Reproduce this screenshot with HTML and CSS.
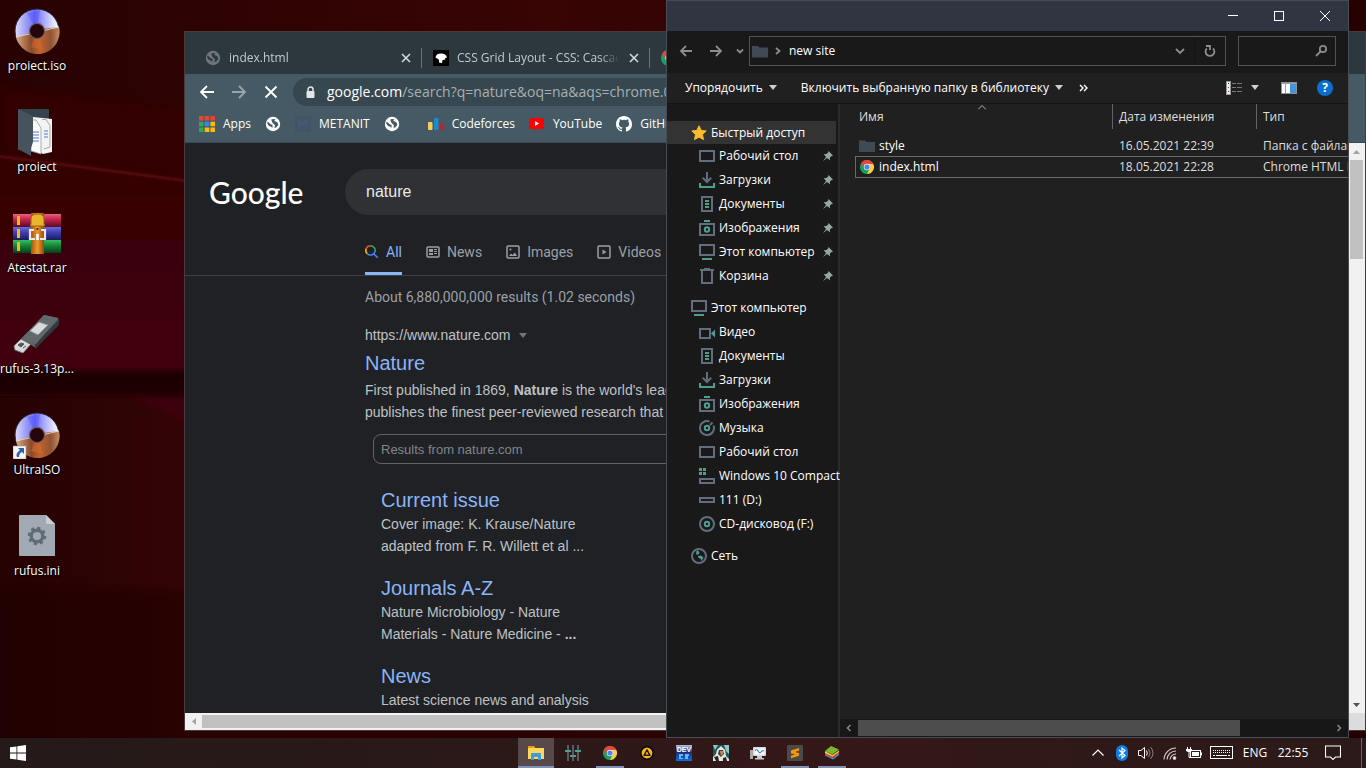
FILE: index.html
```html
<!DOCTYPE html>
<html lang="ru">
<head>
<meta charset="utf-8">
<title>Desktop</title>
<link rel="stylesheet" href="styles.css">
</head>
<body>
<svg class="defs" aria-hidden="true">
  <defs>
    <linearGradient id="gDiscA" x1="0" y1="0" x2="1" y2="0"><stop offset="0" stop-color="#dcdcff"/><stop offset=".25" stop-color="#9c9cf4"/><stop offset=".45" stop-color="#6a6aff"/><stop offset=".7" stop-color="#b4b4fa"/><stop offset="1" stop-color="#fff"/></linearGradient>
    <linearGradient id="gDiscB" x1="0" y1="0" x2="1" y2="0"><stop offset="0" stop-color="#d9a883"/><stop offset=".35" stop-color="#8a4a2a"/><stop offset=".55" stop-color="#c2622c"/><stop offset=".8" stop-color="#8d5335"/><stop offset="1" stop-color="#c88d63"/></linearGradient>
    <linearGradient id="gR" x1="0" y1="0" x2="0" y2="1"><stop offset="0" stop-color="#e8607f"/><stop offset=".4" stop-color="#c72550"/><stop offset="1" stop-color="#5a0a20"/></linearGradient>
    <linearGradient id="gB" x1="0" y1="0" x2="0" y2="1"><stop offset="0" stop-color="#6a6ae0"/><stop offset=".4" stop-color="#4040b4"/><stop offset="1" stop-color="#1b1b5c"/></linearGradient>
    <linearGradient id="gG" x1="0" y1="0" x2="0" y2="1"><stop offset="0" stop-color="#35c060"/><stop offset=".4" stop-color="#168a3c"/><stop offset="1" stop-color="#06401a"/></linearGradient>
    <linearGradient id="gBelt" x1="0" y1="0" x2="1" y2="0"><stop offset="0" stop-color="#a8560c"/><stop offset=".5" stop-color="#eb9a2c"/><stop offset="1" stop-color="#95480a"/></linearGradient>
    <linearGradient id="gDev" x1="0" y1="0" x2="0" y2="1"><stop offset="0" stop-color="#b8bfe0"/><stop offset=".45" stop-color="#1b2f78"/><stop offset="1" stop-color="#0a70e0"/></linearGradient>
  </defs>
  <symbol id="disc" viewBox="0 0 48 48">
    <circle cx="24" cy="24" r="22" fill="url(#gDiscA)" stroke="#2c2430" stroke-width="1"/>
    <path d="M3 30A22 22 0 0 0 46 20L30 22Z" fill="url(#gDiscB)"/>
    <path d="M3 30 46 20" stroke="#eee2d8" stroke-width="1.2" opacity=".8"/>
    <path d="M18 40 24 24 30 43" fill="#db6a2e" opacity=".5"/>
    <path d="M14 6 24 24 27 3" fill="#4040ff" opacity=".3"/>
    <circle cx="24" cy="24" r="7.6" fill="#250507" stroke="#6e5a60" stroke-width="1.2"/>
  </symbol>
  <symbol id="chrome" viewBox="0 0 48 48">
    <path d="M24 24 3.200 12A24 24 0 0 1 44.800 12Z" fill="#e0483c"/>
    <path d="M24 24 44.800 12A24 24 0 0 1 24 48Z" fill="#ffcd42"/>
    <path d="M24 24V48A24 24 0 0 1 3.200 12Z" fill="#16a15f"/>
    <path d="M24 13H44.800L33 30Z" fill="#ffcd42"/>
    <path d="M15 30 3.200 12 24 24 33 30 24 48Z" fill="#16a15f"/>
    <path d="M3.200 12A24 24 0 0 1 44.800 12L43.500 13H24L14 29Z" fill="#e0483c"/>
    <circle cx="24" cy="24" r="11" fill="#f1f1f1"/><circle cx="24" cy="24" r="8.800" fill="#4a86f0"/>
  </symbol>
  <symbol id="globe" viewBox="0 0 16 16">
    <circle cx="8" cy="8" r="7.200" fill="currentColor"/>
    <path d="M2.600 5.400 6 8.400 7.600 8.800 7.400 12 5.800 10.400 4 10 2.200 7.600ZM6.600 3.200 10 3 9.400 5 12.400 6.200 13.400 9 11 11.800 9.400 11.400 10 9.200 7.600 7 6.600 5Z" fill="var(--hole)"/>
  </symbol>
  <symbol id="folder" viewBox="0 0 16 13"><path d="M0 1h6l1.500 1.500H16V12.500H0Z" fill="#3f4a55"/></symbol>
  <symbol id="s-star" viewBox="0 0 16 16"><path d="M8 .8 10.200 5.400 15.200 6 11.500 9.500 12.500 14.600 8 12.100 3.500 14.600 4.500 9.500.8 6 5.800 5.400Z" fill="#fbbb2c" stroke="#fbbb2c" stroke-linejoin="round"/></symbol>
  <symbol id="s-desk" viewBox="0 0 16 16"><rect x="1" y="3" width="14" height="10" fill="none" stroke="#626d7d" stroke-width="2"/></symbol>
  <symbol id="s-down" viewBox="0 0 16 16"><path d="M8 0V9M3.800 5.800 8 10 12.200 5.800" fill="none" stroke="#626d7d" stroke-width="2"/><path d="M1 11v4h14v-4" fill="none" stroke="#4f9f8f" stroke-width="2"/></symbol>
  <symbol id="s-doc" viewBox="0 0 16 16"><rect x="3" y="1" width="10" height="14" fill="none" stroke="#626d7d" stroke-width="2"/><path d="M6 5h4M6 8h4M6 11h4" stroke="#4f9f8f" stroke-width="2"/></symbol>
  <symbol id="s-img" viewBox="0 0 16 16"><rect x="1" y="4" width="14" height="11" fill="none" stroke="#626d7d" stroke-width="2"/><path d="M5 1h6" stroke="#4f9f8f" stroke-width="2"/><circle cx="8" cy="9.500" r="2.200" fill="none" stroke="#4f9f8f" stroke-width="2"/></symbol>
  <symbol id="s-pc" viewBox="0 0 16 16"><rect x="1" y="1" width="14" height="10" fill="none" stroke="#626d7d" stroke-width="2"/><path d="M3 15h10" stroke="#4f9f8f" stroke-width="2"/></symbol>
  <symbol id="s-bin" viewBox="0 0 16 16"><path d="M1 2H15M5 1h6M3 2V15H13V2" fill="none" stroke="#626d7d" stroke-width="2"/></symbol>
  <symbol id="s-video" viewBox="0 0 16 16"><rect x="1" y="5" width="10" height="9" fill="none" stroke="#626d7d" stroke-width="2"/><path d="M16 5.500v8L12 9.500Z" fill="#4f9f8f"/></symbol>
  <symbol id="s-music" viewBox="0 0 16 16"><path d="M10.500 1.500A7 7 0 1 0 14.500 5.500M11 5 13.500 2.500" fill="none" stroke="#626d7d" stroke-width="2"/><circle cx="8" cy="8" r="2.200" fill="none" stroke="#4f9f8f" stroke-width="2"/></symbol>
  <symbol id="s-win" viewBox="0 0 16 16"><path d="M0 0h3v3H0ZM4 0h3v3H4ZM0 4h3v3H0ZM4 4h3v3H4Z" fill="#4f9f8f"/><rect x="1" y="11" width="14" height="4" fill="none" stroke="#626d7d" stroke-width="2"/></symbol>
  <symbol id="s-drive" viewBox="0 0 16 16"><rect x="1" y="6" width="14" height="4" fill="none" stroke="#626d7d" stroke-width="2"/></symbol>
  <symbol id="s-cd" viewBox="0 0 16 16"><circle cx="8" cy="8" r="7" fill="none" stroke="#626d7d" stroke-width="2"/><circle cx="8" cy="8" r="2.200" fill="none" stroke="#4f9f8f" stroke-width="2"/></symbol>
  <symbol id="s-net" viewBox="0 0 16 16"><circle cx="8" cy="8" r="7" fill="none" stroke="#626d7d" stroke-width="2"/><path d="M5.500 3 7 2.500 8.500 4.500 7.500 6.500 5 6.500ZM7 8 10 7.500 12.500 9.500 10.500 13 9.500 10.500 7.500 10Z" fill="#4f9f8f"/></symbol>
  <symbol id="pin" viewBox="0 0 12 12"><path d="M6.500 1 11 5.500 9.600 6 8 7.600 7.800 10.200 5 7.900 1 11.300 4 7 1.700 4.300 4.400 4 6.100 2.400Z" fill="#98a3a8"/></symbol>
</svg>

<main class="desktop">
  <svg class="wallpaper" viewBox="0 0 1366 738" preserveAspectRatio="none" aria-hidden="true">
    <defs>
      <linearGradient id="wTop" x1="0" y1="0" x2="1" y2="0"><stop offset="0" stop-color="#280203"/><stop offset=".4" stop-color="#380404"/><stop offset="1" stop-color="#260102"/></linearGradient>
      <linearGradient id="wMid" x1="0" y1="0" x2="0" y2="1"><stop offset="0" stop-color="#340406"/><stop offset="1" stop-color="#440608"/></linearGradient>
      <linearGradient id="wLow" x1="0" y1="0" x2="1" y2="0"><stop offset="0" stop-color="#260203"/><stop offset=".13" stop-color="#320405"/><stop offset=".5" stop-color="#380404"/><stop offset="1" stop-color="#2a0203"/></linearGradient>
      <filter id="soft"><feGaussianBlur stdDeviation="3"/></filter>
      <filter id="fine" x="-5%" y="-50%" width="110%" height="200%"><feGaussianBlur stdDeviation="1.500"/></filter>
    </defs>
    <rect width="1366" height="738" fill="url(#wTop)"/>
    <path d="M0 86 1366 240V400H0Z" fill="#300405" filter="url(#soft)"/>
    <path d="M-20 154 1386 334V400H-20Z" fill="url(#wMid)" filter="url(#soft)"/>
    <path d="M-10 155 196 182" stroke="#560a0e" stroke-width="3" filter="url(#fine)"/>
    <rect y="396" width="1366" height="342" fill="url(#wLow)"/>
    <path d="M130 396H200V430Z" fill="#3e0507" filter="url(#soft)"/>
    <rect x="-20" y="370" width="1406" height="26" fill="#1f0203" filter="url(#soft)"/>
    <rect x="-20" y="590" width="1406" height="170" fill="#1c0102" opacity=".4" filter="url(#soft)"/>
  </svg>

  <nav class="shortcuts" aria-label="Desktop icons">
    <a class="shortcut" href="#"><svg class="shortcut-icon"><use href="#disc"/></svg><span>proiect.iso</span></a>
    <a class="shortcut" href="#"><svg class="shortcut-icon" viewBox="0 0 48 48">
      <path d="M5 1H36V42H5Z" fill="#36424c"/><path d="M20 9 39 11V44L30 46 20 40Z" fill="#f3f3f3"/><path d="M29 11.500h4l4 6V39l-6 2" fill="none" stroke="#aaa"/><path d="M18 12h5l5 8V46L18 43Z" fill="#fafafa" stroke="#999" stroke-width=".8"/><path d="M20 24h6M20 27h6M19 30h7M18 33h8M31 23h4M31 26h4M31 29h4" stroke="#4a80c8" stroke-width="1.200"/><path d="M5 1 20 8V34L18 40V48L5 41Z" fill="#46525c"/></svg><span>proiect</span></a>
    <a class="shortcut" href="#"><svg class="shortcut-icon" viewBox="0 0 48 48">
      <rect y="5" width="48" height="13" fill="url(#gR)"/><rect y="18" width="48" height="13" fill="url(#gB)"/><rect y="31" width="48" height="13" fill="url(#gG)"/><path d="M4 7h3v9H4ZM4 20h3v9H4ZM4 33h3v9H4Z" fill="#f5b914"/>
      <rect x="18" y="4" width="13" height="41" fill="url(#gBelt)"/><path d="M18 15V10q0-5 6.500-5T31 10v5l1 2H17Z" fill="#e8b62c" stroke="#9c6410"/><path d="M21 21h-4v9h5M27 30h5V21h-4" fill="none" stroke="#e8e8ec" stroke-width="2.200"/><path d="M24.500 25v6" stroke="#fff" stroke-width="2.600"/><circle cx="24.500" cy="20" r="1" fill="#402000"/></svg><span>Atestat.rar</span></a>
    <a class="shortcut" href="#"><svg class="shortcut-icon" viewBox="0 0 48 48">
      <path d="M1 36 8 29 18 34 10 43 2 40Z" fill="#d8d9da" stroke="#777"/><path d="M5 35 8 33 11 34 8 37ZM10 38l3-2" fill="#555" stroke="#555"/><path d="M8 29 31 5 45 8 46 13 23 38Z" fill="#5b6367"/><path d="M46 9V15L22 39V34Z" fill="#32393c"/><path d="M8 29 31 5 45 8 23 34Z" fill="#61696d"/><path d="M17 21 26 12 35 15 25 25Z" fill="#d6d8d9" stroke="#8b8f91"/></svg><span>rufus-3.13p...</span></a>
    <a class="shortcut" href="#"><svg class="shortcut-icon" viewBox="0 0 48 48"><use href="#disc"/><rect y="35" width="13" height="13" fill="#f4f4f4" stroke="#999" stroke-width=".6"/><path d="M5 37h6v6L9 41q-3 1-3 5H4Q2 43 7 39Z" fill="#2b62a8"/></svg><span>UltraISO</span></a>
    <a class="shortcut" href="#"><svg class="shortcut-icon" viewBox="0 0 48 48"><path d="M7 3H33L42 12V44H7Q6 44 6 43V4Q6 3 7 3Z" fill="#a1a9b3"/><path d="M33 3v7.500q0 1.500 1.500 1.500H42Z" fill="#c8cdd3"/><circle cx="24" cy="24" r="5.800" fill="none" stroke="#606b77" stroke-width="3.400"/><circle cx="24" cy="24" r="8" fill="none" stroke="#606b77" stroke-width="2.600" stroke-dasharray="3.140 3.140"/></svg><span>rufus.ini</span></a>
  </nav>

  <section class="browser" aria-label="Chrome">
    <div class="tabstrip">
      <div class="tab tab-first"><svg class="fav fav-dim"><use href="#globe"/></svg><span class="tab-title">index.html</span><button class="tab-close" aria-label="Close"><svg viewBox="0 0 10 10"><path d="M1 1 9 9M9 1 1 9"/></svg></button></div>
      <div class="tab tab-mdn"><svg class="fav" viewBox="0 0 16 16"><rect width="16" height="16" fill="#000"/><path d="M2.500 7.500Q3 3.500 8 3.500t6 4L12 8l.5 1.500-3 .5-.5 3-3-.5V10L5 9Z" fill="#fff"/></svg><span class="tab-title">CSS Grid Layout - CSS: Cascading</span><button class="tab-close" aria-label="Close"><svg viewBox="0 0 10 10"><path d="M1 1 9 9M9 1 1 9"/></svg></button></div>
      <div class="tab"><svg class="fav"><use href="#chrome"/></svg></div>
    </div>
    <div class="toolbar">
      <button aria-label="Back"><svg viewBox="0 0 16 16"><path d="M15 8H2M8 2 2 8l6 6"/></svg></button>
      <button class="dim" aria-label="Forward"><svg viewBox="0 0 16 16"><path d="M1 8H14M8 2l6 6-6 6"/></svg></button>
      <button aria-label="Stop"><svg viewBox="0 0 16 16"><path d="M2.500 2.500 13.500 13.500M13.500 2.500 2.500 13.500"/></svg></button>
      <div class="omnibox"><svg viewBox="0 0 10 13"><path d="M2.500 6V3.500a2.500 2.500 0 0 1 5 0V6" fill="none" stroke="#e3e6e8" stroke-width="1.500"/><rect x="1" y="5" width="8" height="7" rx="1" fill="#e3e6e8"/></svg>
        <div class="url" role="textbox" aria-label="Address" contenteditable="true"><b>google.com</b>/search?q=nature&amp;oq=na&amp;aqs=chrome.0.0</div></div>
    </div>
    <nav class="bookmarks" aria-label="Bookmarks">
      <a class="bm" href="#"><svg viewBox="0 0 14 14"><path d="M0 0h4v4H0ZM5 0h4v4H5ZM10 0h4v4h-4Z" fill="#ea4335"/><path d="M0 5h4v4H0ZM0 10h4v4H0Z" fill="#34a853"/><path d="M5 5h4v4H5Z" fill="#2f8af5"/><path d="M10 5h4v4h-4ZM5 10h4v4H5ZM10 10h4v4h-4Z" fill="#fbbc05"/></svg>Apps</a>
      <a class="bm" href="#" aria-label="Site"><svg><use href="#globe"/></svg></a>
      <a class="bm" href="#"><svg viewBox="0 0 14 14"><rect x=".5" y=".5" width="13" height="13" fill="#42556a" stroke="#3f5568"/><path d="M4 10V4l3 3 3-3v6" fill="none" stroke="#4a5d70"/></svg>METANIT</a>
      <a class="bm bm-wide" href="#" aria-label="Site"><svg><use href="#globe"/></svg></a>
      <a class="bm" href="#"><svg viewBox="0 0 16 14"><rect y="5" width="4.500" height="8" rx="1" fill="#f7cc57"/><rect x="6" y="1" width="4.500" height="12" rx="1" fill="#1e88d0"/><rect x="12" y="6" width="4" height="7" rx="1" fill="#b3272e"/></svg>Codeforces</a>
      <a class="bm" href="#"><svg viewBox="0 0 16 14"><rect y="1" width="15" height="11" rx="2.500" fill="#f00"/><path d="M6 4v5l4-2.500Z" fill="#fff"/></svg>YouTube</a>
      <a class="bm" href="#"><svg viewBox="0 0 16 16"><path fill="#fff" d="M8 0C3.580 0 0 3.580 0 8c0 3.540 2.290 6.530 5.470 7.590.4.070.55-.17.55-.38 0-.19-.01-.82-.01-1.490-2.010.37-2.530-.49-2.690-.94-.09-.23-.48-.94-.82-1.130-.28-.15-.68-.52-.01-.53.63-.01 1.080.58 1.230.82.72 1.210 1.870.87 2.330.66.070-.52.28-.87.51-1.070-1.780-.2-3.640-.89-3.640-3.950 0-.87.31-1.590.82-2.150-.08-.2-.36-1.020.08-2.120 0 0 .67-.21 2.200.82a7.600 7.600 0 0 1 4 0c1.530-1.040 2.200-.82 2.200-.82.44 1.100.16 1.920.08 2.120.51.56.82 1.270.82 2.150 0 3.070-1.870 3.750-3.650 3.950.29.25.54.73.54 1.480 0 1.070-.01 1.930-.01 2.200 0 .21.15.46.55.38A8 8 0 0 0 16 8c0-4.420-3.580-8-8-8"/></svg>GitHub</a>
    </nav>
    <div class="viewport">
      <div class="page">
        <header class="page-head"><a class="logo" href="#">Google</a><input class="query" type="text" value="nature" aria-label="Search"></header>
        <nav class="page-tabs">
          <a class="ptab ptab-on" href="#"><svg viewBox="0 0 16 16" fill="none" stroke-width="1.800"><path d="M6 1A5 5 0 0 0 1.500 4" stroke="#ea4335"/><path d="M1.500 4A5.300 5.300 0 0 0 2.600 10" stroke="#fbbc05"/><path d="M6 1A5.300 5.300 0 0 1 11.500 7.500" stroke="#34a853"/><path d="M2.600 10A5.300 5.300 0 0 0 11.500 7M9.800 10 14.500 14.500" stroke="#4285f4"/></svg>All</a>
          <a class="ptab" href="#"><svg viewBox="0 0 14 14"><rect x="1" y="2" width="12" height="10" rx="1" fill="none" stroke="#9aa0a6" stroke-width="1.500"/><path d="M3 4h4v3H3ZM8 4h3v1H8ZM8 6h3v1H8ZM3 8h4v2H3ZM8 8h3v1H8Z" fill="#9aa0a6"/></svg>News</a>
          <a class="ptab" href="#"><svg viewBox="0 0 14 14"><rect x="1" y="1" width="12" height="12" rx="1" fill="none" stroke="#9aa0a6" stroke-width="1.500"/><path d="M3 11 5 8.500 6.500 10 9 7.500 11 11Z" fill="#9aa0a6"/><circle cx="4.500" cy="4.500" r="1" fill="#9aa0a6"/></svg>Images</a>
          <a class="ptab" href="#"><svg viewBox="0 0 14 14"><rect x="1" y="1" width="12" height="12" rx="1" fill="none" stroke="#9aa0a6" stroke-width="1.500"/><path d="M5.500 4.500v5L9.500 7Z" fill="#9aa0a6"/></svg>Videos</a>
        </nav>
        <div class="results">
          <p class="stats">About 6,880,000,000 results (1.02 seconds)</p>
          <p class="cite">https://www.nature.com <svg viewBox="0 0 8 5"><path d="M0 0h8L4 5Z" fill="#70757a"/></svg></p>
          <h2><a href="#">Nature</a></h2>
          <p class="snippet">First published in 1869, <b>Nature</b> is the world's leading<br>publishes the finest peer-reviewed research that</p>
          <input class="sitesearch" type="text" placeholder="Results from nature.com" aria-label="Results from nature.com">
          <div class="sitelinks">
            <div><h3><a href="#">Current issue</a></h3><p>Cover image: K. Krause/Nature<br>adapted from F. R. Willett et al ...</p></div>
            <div><h3><a href="#">Journals A-Z</a></h3><p>Nature Microbiology - Nature<br>Materials - Nature Medicine - <b>...</b></p></div>
            <div><h3><a href="#">News</a></h3><p>Latest science news and analysis</p></div>
          </div>
        </div>
      </div>
      <div class="vbar"><button aria-label="Up"><svg viewBox="0 0 7 4"><path d="M0 4h7L3.500 0Z" fill="#a3a3a3"/></svg></button><div class="vthumb"></div><button class="vdown" aria-label="Down"><svg viewBox="0 0 7 4"><path d="M0 0h7L3.500 4Z" fill="#505050"/></svg></button></div>
      <div class="hbar"><button aria-label="Left"><svg viewBox="0 0 4 7"><path d="M4 0v7L0 3.500Z" fill="#a3a3a3"/></svg></button><div class="hthumb"></div></div>
      <div class="corner"></div>
    </div>
  </section>

  <section class="explorer" aria-label="new site">
    <div class="titlebar">
      <button aria-label="Minimize"><svg viewBox="0 0 12 12"><path d="M1 5.500h10"/></svg></button>
      <button aria-label="Maximize"><svg viewBox="0 0 12 12"><rect x="1.500" y="1.500" width="9" height="9"/></svg></button>
      <button aria-label="Close"><svg viewBox="0 0 12 12"><path d="M1 1 11 11M11 1 1 11"/></svg></button>
    </div>
    <div class="navbar">
      <button aria-label="Назад"><svg viewBox="0 0 14 14"><path d="M13 7H2M7 2 2 7l5 5"/></svg></button>
      <button aria-label="Вперёд"><svg viewBox="0 0 14 14"><path d="M1 7H12M7 2l5 5-5 5"/></svg></button>
      <button class="nav-small" aria-label="Журнал"><svg viewBox="0 0 14 14"><path d="M4 5.500 7 8.500l3-3"/></svg></button>
      <div class="address"><svg class="address-folder"><use href="#folder"/></svg><svg class="crumb" viewBox="0 0 6 8"><path d="M1 1 4.500 4 1 7"/></svg><a href="#">new site</a>
        <button class="addr-drop" aria-label="Развернуть"><svg viewBox="0 0 14 14"><path d="M3 5 7 9l4-4"/></svg></button><button class="addr-refresh" aria-label="Обновить"><svg viewBox="0 0 14 14"><path d="M3.800 4.500A4.400 4.400 0 1 0 10 4.400M3 2h4v4"/></svg></button></div>
      <div class="find"><input type="search" aria-label="Поиск"><svg viewBox="0 0 14 14"><circle cx="9" cy="5" r="3.200"/><path d="M6.500 7.500 2 12"/></svg></div>
    </div>
    <div class="commands">
      <button class="organize">Упорядочить<svg class="tri" viewBox="0 0 8 5"><path d="M0 0h8L4 5Z"/></svg></button>
      <button class="include">Включить выбранную папку в библиотеку<svg class="tri" viewBox="0 0 8 5"><path d="M0 0h8L4 5Z"/></svg></button>
      <button class="more" aria-label="Ещё"><svg viewBox="0 0 10 8"><path d="M1 1 4 4 1 7M5 1 8 4 5 7" fill="none" stroke="#fff" stroke-width="1.400"/></svg></button>
      <button class="view" aria-label="Вид"><svg viewBox="0 0 16 14"><rect x=".5" y=".5" width="4" height="13" fill="#eee" stroke="#999"/><path d="M2 2.500h1" stroke="#222"/><path d="M2 6.500h1" stroke="#2b6cd0"/><path d="M2 10.500h1" stroke="#d22"/><path d="M6 2.500h4M11 2.500h5M6 6.500h4M11 6.500h5M6 10.500h4M11 10.500h5" stroke="#777"/></svg><svg class="tri" viewBox="0 0 8 5"><path d="M0 0h8L4 5Z"/></svg></button>
      <button class="preview" aria-label="Область просмотра"><svg viewBox="0 0 16 12"><rect x=".5" y=".5" width="15" height="11" fill="#fff" stroke="#8a9299"/><rect x="9" y="2" width="6" height="9" fill="#3f96de"/><path d="M4.500 2v9M1 1.500h14" stroke="#98a0a8"/></svg></button>
      <button class="help" aria-label="Справка">?</button>
    </div>
    <div class="body">
      <nav class="tree" aria-label="Область переходов">
        <div class="group">
          <a class="root root-on" href="#"><svg><use href="#s-star"/></svg>Быстрый доступ</a>
          <a href="#"><svg><use href="#s-desk"/></svg>Рабочий стол<svg class="pin"><use href="#pin"/></svg></a>
          <a href="#"><svg><use href="#s-down"/></svg>Загрузки<svg class="pin"><use href="#pin"/></svg></a>
          <a href="#"><svg><use href="#s-doc"/></svg>Документы<svg class="pin"><use href="#pin"/></svg></a>
          <a href="#"><svg><use href="#s-img"/></svg>Изображения<svg class="pin"><use href="#pin"/></svg></a>
          <a href="#"><svg><use href="#s-pc"/></svg>Этот компьютер<svg class="pin"><use href="#pin"/></svg></a>
          <a href="#"><svg><use href="#s-bin"/></svg>Корзина<svg class="pin"><use href="#pin"/></svg></a>
        </div>
        <div class="group">
          <a class="root" href="#"><svg><use href="#s-pc"/></svg>Этот компьютер</a>
          <a href="#"><svg><use href="#s-video"/></svg>Видео</a>
          <a href="#"><svg><use href="#s-doc"/></svg>Документы</a>
          <a href="#"><svg><use href="#s-down"/></svg>Загрузки</a>
          <a href="#"><svg><use href="#s-img"/></svg>Изображения</a>
          <a href="#"><svg><use href="#s-music"/></svg>Музыка</a>
          <a href="#"><svg><use href="#s-desk"/></svg>Рабочий стол</a>
          <a href="#"><svg><use href="#s-win"/></svg>Windows 10 Compact</a>
          <a href="#"><svg><use href="#s-drive"/></svg>111 (D:)</a>
          <a href="#"><svg><use href="#s-cd"/></svg>CD-дисковод (F:)</a>
        </div>
        <div class="group"><a class="root" href="#"><svg><use href="#s-net"/></svg>Сеть</a></div>
      </nav>
      <div class="files">
        <table>
          <colgroup><col class="c-name"><col class="c-date"><col></colgroup>
          <thead><tr><th><span class="sorted">Имя<svg viewBox="0 0 8 5"><path d="M0 4.500 4 .5 8 4.500"/></svg></span></th><th>Дата изменения</th><th>Тип</th></tr></thead>
          <tbody>
            <tr><td><span class="file"><svg><use href="#folder"/></svg>style</span></td><td>16.05.2021 22:39</td><td>Папка с файлами</td></tr>
            <tr class="focused"><td><span class="file"><svg><use href="#chrome"/></svg>index.html</span></td><td>18.05.2021 22:28</td><td>Chrome HTML Do</td></tr>
          </tbody>
        </table>
        <div class="dark-bar"><button aria-label="Влево"><svg viewBox="0 0 8 8"><path d="M5.500 1 2.500 4l3 3"/></svg></button><div class="dark-track"><div class="dark-thumb"></div></div><button aria-label="Вправо"><svg viewBox="0 0 8 8"><path d="M2.500 1 5.500 4l-3 3"/></svg></button></div>
      </div>
    </div>
  </section>
</main>

<footer class="taskbar">
  <button class="start" aria-label="Пуск"><svg viewBox="0 0 16 16"><path d="M0 2.300 6.500 1.400V7.600H0ZM7.300 1.300 16 0V7.600H7.300ZM0 8.400H6.500V14.600L0 13.700ZM7.300 8.400H16V16L7.300 14.700Z" fill="#fff"/></svg></button>
  <div class="apps">
    <button class="app app-active open" aria-label="Проводник"><svg viewBox="0 0 16 16"><path d="M0 1h6l1 1v2H0Z" fill="#e79f0d"/><path d="M0 3h16v11H0Z" fill="#ffd65c"/><path d="M3 15V9q0-1 1-1h8q1 0 1 1v6h-3v-3H6v3Z" fill="#3c9ce4"/></svg></button>
    <button class="app" aria-label="Настройки"><svg viewBox="0 0 16 16"><path d="M3 0V16M8 0V16M13 0V16" stroke="#626d7d" stroke-width="1.600"/><path d="M0 6h6M5 11h6M10 6h6" stroke="#4f9f8f" stroke-width="2"/></svg></button>
    <button class="app open" aria-label="Chrome"><svg class="app-chrome"><use href="#chrome"/></svg></button>
    <button class="app" aria-label="AIMP"><svg viewBox="0 0 16 16"><circle cx="8" cy="8" r="6.200" fill="#f9b81d" stroke="#0c0703" stroke-width="1.600"/><path d="M8 4.800 11 10.300H5Z" fill="none" stroke="#241703" stroke-width="1.400" stroke-linejoin="round"/></svg></button>
    <button class="app" aria-label="Dev"><svg viewBox="0 0 16 16"><rect width="16" height="16" fill="url(#gDev)"/><text class="dev" x="8" y="7" text-anchor="middle">DEV</text><path d="M3 9h4v2H5v2h2v1H3ZM9 9h4v2h-1v3H9Z" fill="#6fb0f2"/></svg></button>
    <button class="app" aria-label="Game"><svg viewBox="0 0 16 16"><rect width="16" height="16" fill="#1d5960"/><path d="M0 0h5L2 5ZM11 0h5v9l-3-3Z" fill="#95c8c4"/><path d="M8 1 12 5 13 11 16 14V16H0V12L3 9 4 5Z" fill="#e8e8df"/><path d="M6 5h4l1 4-3 3-3-3Z" fill="#4a342b"/><path d="M7 6h3v3L8 11Z" fill="#b78d6c"/><path d="M1 12 5 11 6 16H3ZM13 12 10 13v3h4Z" fill="#202627"/></svg></button>
    <button class="app" aria-label="Monitor"><svg viewBox="0 0 16 16"><rect y="5" width="3" height="9" fill="#aaa"/><rect x="3" y="2" width="13" height="9" rx="1" fill="#d7dadd"/><rect x="4.500" y="3.500" width="10" height="6" fill="#fff"/><path d="M5 6q1.500-3 3 0t3 1 3-1" fill="none" stroke="#258ac0" stroke-width="1.200"/><path d="M7 11h5v2h2v1.500H5V13h2Z" fill="#c6c9cc"/></svg></button>
    <button class="app open" aria-label="Sublime"><svg viewBox="0 0 16 16"><rect width="16" height="16" rx="1" fill="#4a4a4a"/><path d="M4 5.500 12 3v2.600L8 7l4 1.200v2.600L4 13.300v-2.500L8 9.400 4 8.200Z" fill="#ff9800"/></svg></button>
    <button class="app open" aria-label="BlueStacks"><svg viewBox="0 0 16 16"><path d="M1 9 9 13 15 8V10L9 14.500 1 10.500Z" fill="#3d9be9"/><path d="M1 7.500 8.500 11 15 6.500V8.500L8.500 13 1 9.500Z" fill="#e23e38"/><path d="M1 6 8.500 10 15 5.500V7L8.500 11.500 1 8Z" fill="#f9d13a"/><path d="M7 1 15 4.500 8.500 9.500 1 6Z" fill="#7cb82e"/></svg></button>
  </div>
  <div class="tray">
    <button aria-label="Скрытые значки"><svg viewBox="0 0 16 16"><path d="M2.500 10.500 8 5l5.500 5.500" fill="none" stroke="#fff" stroke-width="1.200"/></svg></button>
    <button aria-label="Bluetooth"><svg viewBox="0 0 16 16"><rect x="2" width="12" height="16" rx="6" fill="#0c7de8"/><path d="M5 5 11 10.500 8 13V3l3 2.500L5 11" fill="none" stroke="#fff" stroke-width="1.200"/></svg></button>
    <button aria-label="Громкость"><svg viewBox="0 0 16 16" fill="none" stroke="#fff"><path d="M.5 5.500h2.500L6.500 2.500v11L3 10.500H.5Z"/><path d="M8.500 5.500q1.500 2.500 0 5"/><path d="M10.500 4q3 4 0 8M12.500 2q5 6 0 12" stroke="#8b7a7a"/></svg></button>
    <button aria-label="Сеть"><svg viewBox="0 0 16 16" fill="none" stroke="#d9d2d2" stroke-width="1.100"><path d="M2 14.500A12 12 0 0 1 14 3M5 14.500A9 9 0 0 1 14 6M8 14.500A6 6 0 0 1 14 9"/><circle cx="12.500" cy="13" r="1.300" fill="#fff"/></svg></button>
    <button aria-label="Батарея"><svg viewBox="0 0 16 16"><rect x="4.500" y="5.500" width="10" height="7" fill="none" stroke="#fff"/><rect x="6" y="7" width="7" height="4" fill="#fff"/><path d="M15.500 7.500v3M1.500 2v2M4.500 2v2M3 6v6.500h2" fill="none" stroke="#fff"/><path d="M0 4h6v2L4 7H2L0 6Z" fill="#fff"/></svg></button>
    <button class="kb" aria-label="Клавиатура"><svg viewBox="0 0 23 14"><rect x=".5" y=".5" width="22" height="12" fill="none" stroke="#fff"/><path d="M3 4.500h17M3 6.500h17" stroke="#fff" stroke-dasharray="1 1"/><path d="M3 9.500h2M6 9.500h11M18 9.500h2" stroke="#fff"/></svg></button>
    <button class="lang">ENG</button>
    <button class="lang">22:55</button>
    <button class="note" aria-label="Уведомления"><svg viewBox="0 0 16 16"><path d="M.5 1h15v11H10.500L8 14.500 5.500 12H.5Z" fill="none" stroke="#fff" stroke-width="1.100"/></svg></button>
    <button class="peek" aria-label="Свернуть все окна"></button>
  </div>
</footer>
</body>
</html>
```
FILE: styles.css
```css
* { box-sizing: border-box; }
body {
  margin: 0;
  height: 100vh;
  display: flex;
  flex-direction: column;
  overflow: hidden;
  background: #230203;
  color: #fff;
  font: 12px/18px "Open Sans", "Noto Sans", sans-serif;
}
.defs { position: absolute; width: 0; height: 0; }
svg { display: block; flex: none; }
a { color: inherit; text-decoration: none; }
p, h2, h3 { margin: 0; font-weight: 400; }
button {
  margin: 0;
  padding: 0;
  border: 0;
  background: none;
  color: inherit;
  font: inherit;
  display: flex;
  align-items: center;
  justify-content: center;
}

/* Desktop */
.desktop { position: relative; flex: 1; min-height: 0; }
.wallpaper { position: absolute; inset: 0; width: 100%; height: 100%; }
.shortcuts { position: relative; width: 74px; padding-top: 7px; display: flex; flex-direction: column; }
.shortcut {
  height: 101px;
  display: flex;
  flex-direction: column;
  align-items: center;
  gap: 2px;
  white-space: nowrap;
  text-shadow: 1px 1px 2px #000, 0 0 2px #000;
}
.shortcut-icon { width: 48px; height: 48px; }

/* Browser window */
.browser {
  position: absolute;
  left: 184px;
  right: 0;
  top: 31px;
  bottom: 7px;
  display: flex;
  flex-direction: column;
  overflow: hidden;
  border: 1px solid #4a3a3c;
  background: #2d383e;
}
.tabstrip { height: 42px; display: flex; align-items: center; padding: 9px 0 0 20px; color: #c3c8cb; }
.tab { height: 20px; flex: none; display: flex; align-items: center; padding-left: 11px; border-left: 1px solid #67737a; }
.tab-first { width: 216px; border-left: 0; padding-left: 0; }
.tab-mdn { width: 228px; }
.tab .fav { width: 16px; height: 16px; }
.fav-dim { color: #6f7579; --hole: #2d383e; }
.tab-title {
  flex: 1;
  margin-left: 8px;
  overflow: hidden;
  white-space: nowrap;
  -webkit-mask-image: linear-gradient(90deg, #000 88%, transparent);
  mask-image: linear-gradient(90deg, #000 88%, transparent);
}
.tab-close { width: 30px; height: 20px; }
.tab-close svg { width: 10px; height: 10px; fill: none; stroke: #d5d9db; stroke-width: 1.600; }
.toolbar { height: 36px; display: flex; align-items: center; padding-left: 6px; background: #455a64; }
.toolbar button { width: 32px; height: 32px; }
.toolbar svg { width: 16px; height: 16px; fill: none; stroke: #fff; stroke-width: 1.800; }
.toolbar .dim { opacity: .45; }
.omnibox { flex: 1; height: 28px; margin: 0 120px 0 6px; padding-left: 12px; display: flex; align-items: center; gap: 11px; border-radius: 14px; background: #37474f; font-size: 14px; color: #a7afb3; overflow: hidden; }
.omnibox svg { width: 11px; height: 13px; stroke: none; }
.url { white-space: nowrap; outline: 0; }
.url b { font-weight: 400; color: #fff; }
.bookmarks { height: 33px; flex: none; display: flex; align-items: center; gap: 14px; padding: 0 0 5px 14px; background: #455a64; border-bottom: 1px solid #3a4b54; }
.bm { display: flex; align-items: center; gap: 8px; white-space: nowrap; color: #fff; --hole: #455a64; }
.bm svg { width: 16px; height: 16px; }
.bm-wide { margin-right: 14px; }

/* Search page */
.viewport { flex: 1; min-height: 0; display: grid; grid-template: 1fr 17px / 1fr 17px; }
.page { overflow: hidden; background: #202124; color: #bdc1c6; font: 14px/22px "Liberation Sans", Arial, sans-serif; }
.page-head { display: flex; align-items: center; padding: 26px 0 0 24px; }
.logo { width: 136px; color: #fff; font: 500 30px/40px Lato, sans-serif; }
.query { width: 690px; height: 46px; padding: 0 21px; border: 0; border-radius: 23px; background: #303134; color: #e8eaed; font: 16px/22px "Liberation Sans", Arial, sans-serif; outline: 0; }
.page-tabs { display: flex; gap: 24px; margin-top: 14px; padding-left: 180px; height: 47px; border-bottom: 1px solid #3c4043; color: #9aa0a6; font: 14px/20px Roboto, sans-serif; }
.ptab { display: flex; align-items: center; gap: 7px; height: 46px; padding-top: 2px; border-bottom: 3px solid transparent; }
.ptab svg { width: 14px; height: 14px; }
.ptab-on { color: #8ab4f8; border-color: #8ab4f8; }
.results { padding-left: 180px; }
.stats { padding-top: 10px; color: #9aa0a6; font: 14px/22px Roboto, sans-serif; }
.cite { display: flex; align-items: center; gap: 8px; margin-top: 16px; }
.cite svg { width: 8px; height: 5px; }
.results h2, .results h3 { font-size: 20px; line-height: 26px; color: #8ab4f8; }
.results h2 { margin: 4px 0 3px; }
.snippet { white-space: nowrap; }
.sitesearch { width: 480px; height: 30px; margin: 11px 0 0 8px; padding: 0 7px; border: 1px solid #5f6368; border-radius: 8px; background: none; color: #bdc1c6; font: 13px/20px "Liberation Sans", Arial, sans-serif; }
.sitesearch::placeholder { color: #80868b; opacity: 1; }
.sitelinks { display: flex; flex-direction: column; gap: 18px; padding: 23px 0 0 16px; white-space: nowrap; }
.vbar { grid-row: 1; grid-column: 2; display: flex; flex-direction: column; align-items: center; background: #f1f1f1; }
.vbar button { width: 17px; height: 17px; }
.vbar svg { width: 7px; height: 4px; }
.vthumb { width: 13px; height: 99px; background: #c1c1c1; }
.vdown { margin-top: auto; }
.hbar { display: flex; align-items: center; background: #f1f1f1; }
.hbar button { width: 17px; height: 17px; }
.hbar svg { width: 4px; height: 7px; }
.hthumb { width: 80%; height: 13px; background: #c1c1c1; }
.corner { background: #dcdcdc; }

/* Explorer window */
.explorer {
  position: absolute;
  left: 666px;
  right: 17px;
  top: 0;
  bottom: 0;
  display: flex;
  flex-direction: column;
  overflow: hidden;
  border: 1px solid #474c57;
  background: #191919;
}
.titlebar { height: 30px; flex: none; display: flex; justify-content: flex-end; background: #2f3541; }
.titlebar button { width: 46px; }
.titlebar svg { width: 12px; height: 12px; fill: none; stroke: #fff; stroke-width: 1; }
.navbar { height: 42px; flex: none; display: flex; align-items: center; padding: 0 12px 2px 4px; }
.navbar svg { fill: none; stroke: #8c8c8c; stroke-width: 1.800; }
.navbar button { width: 30px; height: 30px; }
.navbar button svg, .find svg { width: 14px; height: 14px; }
.navbar .nav-small { width: 18px; }
.address { flex: 1; height: 30px; display: flex; align-items: center; padding-left: 2px; border: 1px solid #535353; }
.navbar .address-folder { width: 16px; height: 13px; stroke: none; }
.crumb { width: 6px; height: 8px; margin: 0 8px 0 7px; }
.address .addr-drop { margin-left: auto; height: 28px; border-right: 1px solid #141414; }
.find { width: 98px; height: 30px; margin-left: 12px; display: flex; align-items: center; padding-right: 7px; border: 1px solid #535353; }
.find input { flex: 1; min-width: 0; height: 26px; border: 0; background: none; outline: 0; color: #fff; }
.commands { height: 31px; flex: none; display: flex; align-items: center; padding: 0 15px 1px 18px; background: #202020; border-bottom: 1px solid #151515; white-space: nowrap; }
.commands button { gap: 6px; }
.commands svg { width: 16px; height: 14px; }
.commands .tri { width: 8px; height: 5px; fill: #d0d0d0; }
.commands .organize { margin-right: 24px; }
.commands .include { margin-right: 16px; }
.commands .more svg { width: 10px; height: 8px; }
.commands .view { margin: 0 22px 0 auto; gap: 9px; }
.commands .preview { margin-right: 20px; }
.commands .help { width: 16px; height: 16px; border-radius: 50%; background: #0a6fd0; font-weight: 700; }
.body { flex: 1; min-height: 0; display: flex; }
.tree { width: 173px; flex: none; padding: 16px 2px 0 0; border-right: 2px solid #2b2b2b; display: flex; flex-direction: column; gap: 8px; }
.group { display: flex; flex-direction: column; }
.group a { height: 24px; display: flex; align-items: center; gap: 4px; padding-left: 32px; white-space: nowrap; }
.group a svg { width: 16px; height: 16px; }
.group .root { padding-left: 24px; }
.group .root-on { background: #333; border-top: 1px solid #191919; }
.group a .pin { width: 12px; height: 12px; margin: 0 2px 0 auto; }
.files { flex: 1; min-width: 0; display: flex; flex-direction: column; background: #202020; }
table { width: 100%; padding-left: 15px; border-spacing: 0; border-collapse: separate; table-layout: fixed; color: #dedede; }
.c-name { width: 257px; }
.c-date { width: 144px; }
th, td { padding: 0 0 0 6px; text-align: left; font-weight: 400; white-space: nowrap; overflow: hidden; }
th { height: 25px; }
th + th { border-left: 1px solid #636363; }
thead th:first-child { padding-left: 4px; }
tbody td:first-child { padding-left: 3px; border-left-width: 1px; }
.sorted { display: flex; align-items: center; position: relative; }
.sorted svg { position: absolute; left: 47%; top: -3px; width: 8px; height: 5px; fill: none; stroke: #b5b5b5; }
tbody::before { content: ""; display: block; height: 6px; }
tbody td { height: 21px; border: 0 solid transparent; border-top-width: 1px; border-bottom-width: 1px; }
tbody td + td { padding-left: 7px; }
.focused td { height: 22px; border-color: #6a6a6a; }
.file { display: flex; align-items: center; gap: 4px; color: #fff; }
.file svg { width: 16px; height: 14px; }
.dark-bar { height: 18px; margin-top: auto; display: flex; align-items: center; background: #171717; }
.dark-bar button { width: 18px; height: 18px; }
.dark-bar svg { width: 8px; height: 8px; fill: none; stroke: #858585; stroke-width: 1.600; }
.dark-track { flex: 1; height: 16px; }
.dark-thumb { width: 81%; height: 16px; background: #4d4d4d; }

/* Taskbar */
.taskbar { height: 30px; flex: none; display: flex; background: linear-gradient(90deg, #241a19, #2a1918 35%, #341817 60%, #2b1a19); }
.start { width: 36px; }
.start svg, .app svg { width: 16px; height: 16px; }
.apps { flex: 1; display: flex; gap: 1px; padding-left: 482px; }
.app { width: 36px; position: relative; }
.app-active { background: #57494a; }
.open::after { content: ""; position: absolute; left: 4px; right: 4px; bottom: 0; height: 2px; background: #8090b8; }
.app-active::after { left: 0; right: 0; }
.app svg.app-chrome { width: 14px; height: 14px; }
.dev { fill: #fff; font: 700 7px "Liberation Sans", sans-serif; }
.tray { display: flex; }
.tray button { width: 24px; }
.tray svg { width: 16px; height: 16px; }
.tray .kb { width: 30px; }
.tray .kb svg { width: 23px; height: 14px; }
.tray .lang { width: 38px; }
.tray .note { width: 42px; margin-right: 7px; }
.tray .peek { width: 5px; border-left: 1px solid #6b5f5f; }
```
